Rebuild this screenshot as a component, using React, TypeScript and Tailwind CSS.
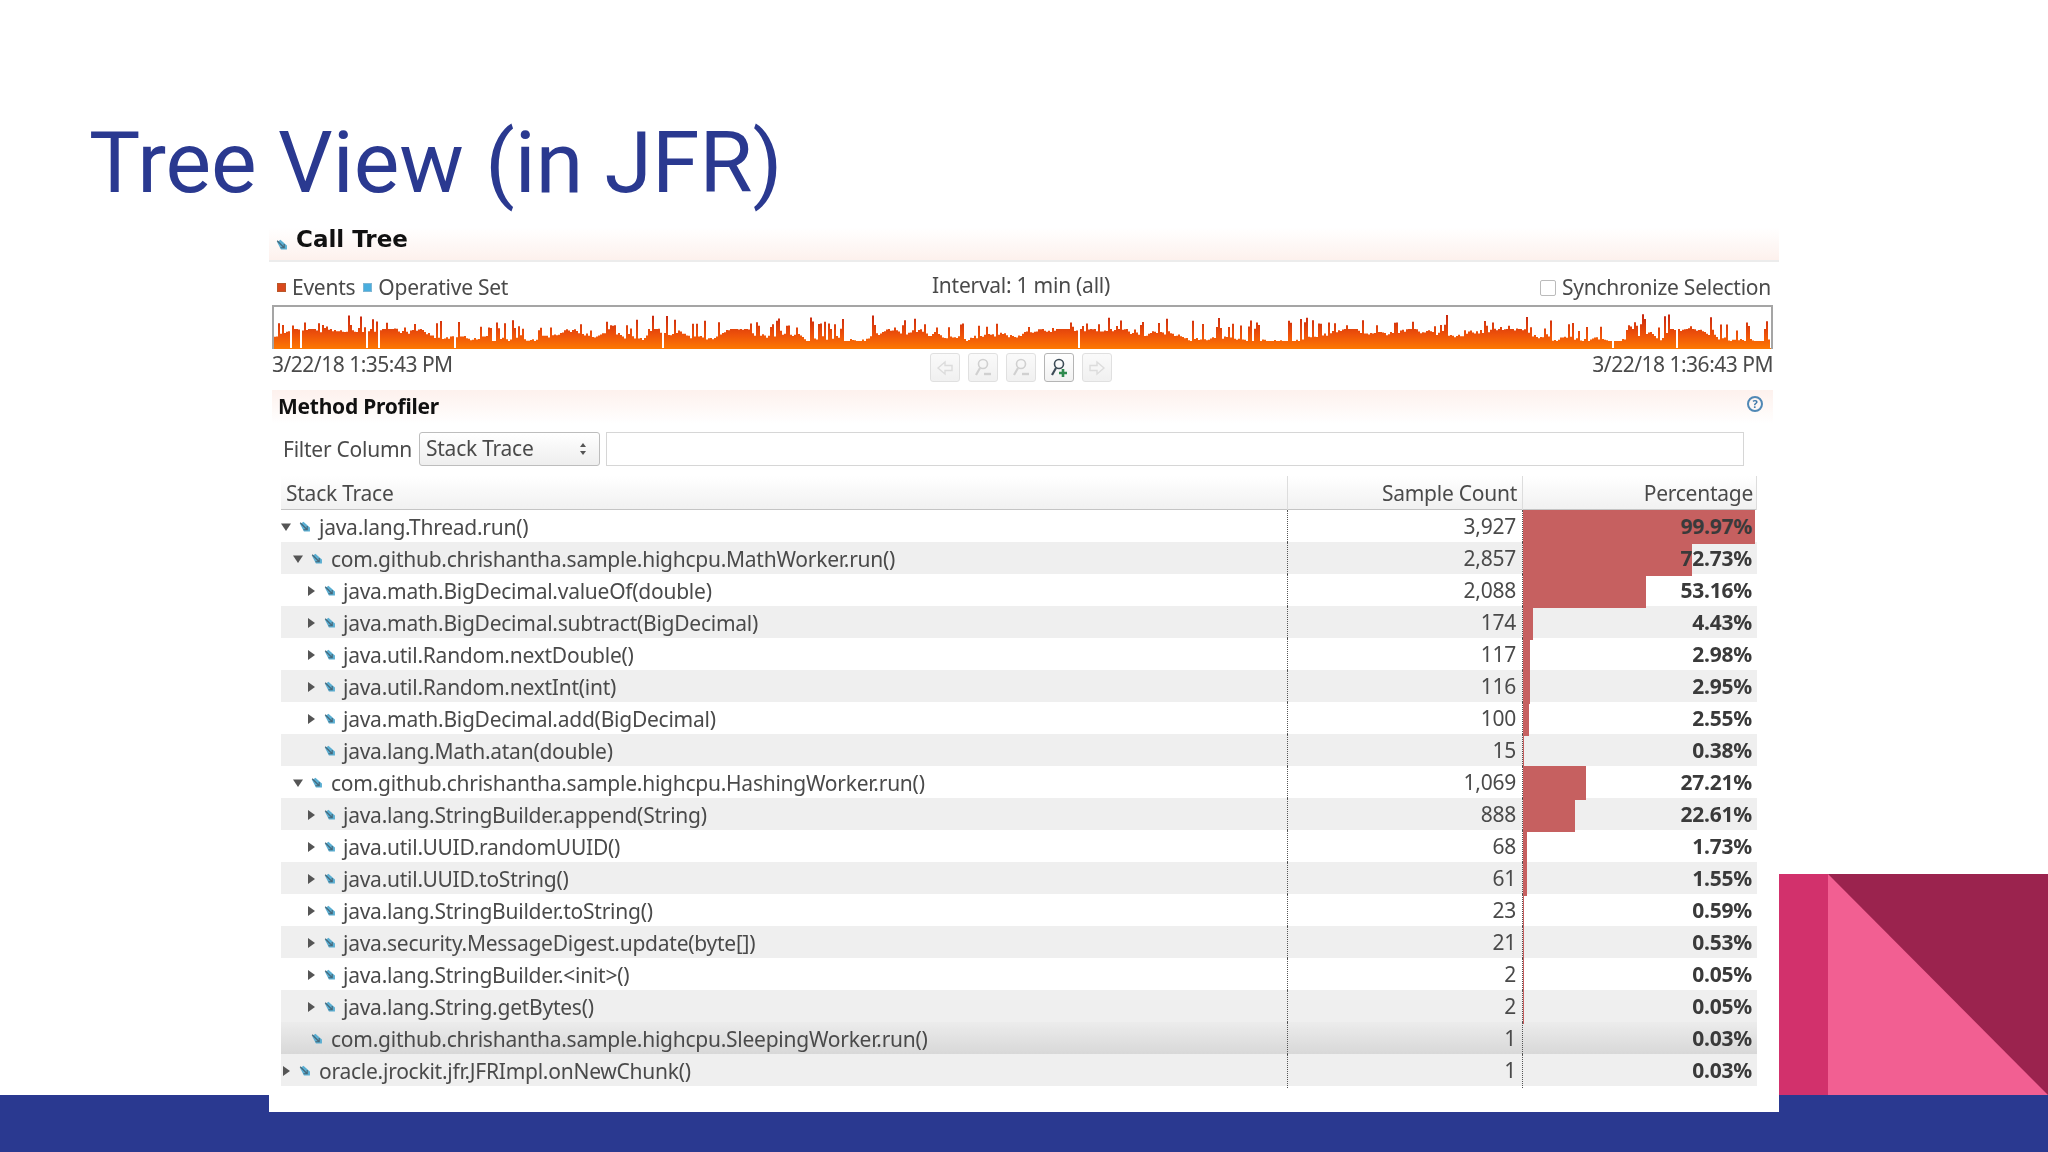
import React from "react";

const BLUE = "#2a3990";

interface Row {
  name: string;
  depth: number;
  twisty: "open" | "closed" | "none";
  count: string;
  pct: number;
  selected?: boolean;
}

const rows: Row[] = [
  { name: "java.lang.Thread.run()", depth: 0, twisty: "open", count: "3,927", pct: 99.97 },
  { name: "com.github.chrishantha.sample.highcpu.MathWorker.run()", depth: 1, twisty: "open", count: "2,857", pct: 72.73 },
  { name: "java.math.BigDecimal.valueOf(double)", depth: 2, twisty: "closed", count: "2,088", pct: 53.16 },
  { name: "java.math.BigDecimal.subtract(BigDecimal)", depth: 2, twisty: "closed", count: "174", pct: 4.43 },
  { name: "java.util.Random.nextDouble()", depth: 2, twisty: "closed", count: "117", pct: 2.98 },
  { name: "java.util.Random.nextInt(int)", depth: 2, twisty: "closed", count: "116", pct: 2.95 },
  { name: "java.math.BigDecimal.add(BigDecimal)", depth: 2, twisty: "closed", count: "100", pct: 2.55 },
  { name: "java.lang.Math.atan(double)", depth: 2, twisty: "none", count: "15", pct: 0.38 },
  { name: "com.github.chrishantha.sample.highcpu.HashingWorker.run()", depth: 1, twisty: "open", count: "1,069", pct: 27.21 },
  { name: "java.lang.StringBuilder.append(String)", depth: 2, twisty: "closed", count: "888", pct: 22.61 },
  { name: "java.util.UUID.randomUUID()", depth: 2, twisty: "closed", count: "68", pct: 1.73 },
  { name: "java.util.UUID.toString()", depth: 2, twisty: "closed", count: "61", pct: 1.55 },
  { name: "java.lang.StringBuilder.toString()", depth: 2, twisty: "closed", count: "23", pct: 0.59 },
  { name: "java.security.MessageDigest.update(byte[])", depth: 2, twisty: "closed", count: "21", pct: 0.53 },
  { name: "java.lang.StringBuilder.<init>()", depth: 2, twisty: "closed", count: "2", pct: 0.05 },
  { name: "java.lang.String.getBytes()", depth: 2, twisty: "closed", count: "2", pct: 0.05 },
  { name: "com.github.chrishantha.sample.highcpu.SleepingWorker.run()", depth: 1, twisty: "none", count: "1", pct: 0.03, selected: true },
  { name: "oracle.jrockit.jfr.JFRImpl.onNewChunk()", depth: 0, twisty: "closed", count: "1", pct: 0.03 },
];

// seeded so the spikes stay put between runs
function buildChartPath(width: number, height: number) {
  let seed = 1834;
  const rand = () => {
    seed = (seed * 1664525 + 1013904223) % 4294967296;
    return seed / 4294967296;
  };
  let d = `M0 ${height}`;
  let level = 10;
  for (let x = 0; x < width; x += 2) {
    level += (rand() - 0.5) * 5;
    level = Math.max(8, Math.min(20, level));
    const r = rand();
    let h = level;
    if (r > 0.93) h = 25 + rand() * 10;
    else if (r > 0.76) h = 18 + rand() * 9;
    else if (r < 0.012) h = 1;
    d += `V${(height - h).toFixed(1)}H${x + 2}`;
  }
  return d + `V${height}Z`;
}

const chartPath = buildChartPath(1497, 40);

function FrameIcon() {
  return (
    <svg width="13" height="13" viewBox="0 0 12 12" className="shrink-0">
      <path d="M2 4 L5 1.5 L11 7 L11 10.5 L5.5 10.5 Z" fill="#5aaed2" />
      <path d="M2 2.5 L8.5 9 M8.5 5.5 V9 H5" stroke="#46687a" strokeWidth="1.1" fill="none" />
    </svg>
  );
}

function Twisty({ kind }: { kind: Row["twisty"] }) {
  if (kind === "none") return <span className="w-[10px] shrink-0" />;
  return (
    <svg width="10" height="10" viewBox="0 0 10 10" className="shrink-0">
      {kind === "open" ? <path d="M0 1.5 H10 L5 9 Z" fill="#555" /> : <path d="M2 0 L9 5 L2 10 Z" fill="#555" />}
    </svg>
  );
}

function ToolButton({ children, active }: { children: React.ReactNode; active?: boolean }) {
  return (
    <div
      className={`w-[30px] h-[29px] rounded-[3px] border flex items-center justify-center bg-gradient-to-b ${
        active ? "border-[#b5b5b5] from-white to-[#f1f1f1]" : "border-[#e0e0e0] from-[#fafafa] to-[#f0f0f0]"
      }`}
    >
      {children}
    </div>
  );
}

function Lens({ color, badge }: { color: string; badge: string }) {
  return (
    <svg width="22" height="22" viewBox="0 0 22 22">
      <circle cx="11" cy="7" r="4.5" fill="none" stroke={color} strokeWidth="1.6" />
      <path d="M8 11 L4 18" stroke={color} strokeWidth="2.2" />
      {badge === "plus" ? (
        <path d="M15 12 V20 M11 16 H19" stroke="#2f8a4e" strokeWidth="2.6" />
      ) : (
        <path d="M12 17 H19" stroke={badge} strokeWidth="2.4" />
      )}
    </svg>
  );
}

function Arrow({ flip }: { flip?: boolean }) {
  return (
    <svg width="20" height="18" viewBox="0 0 20 18" className={flip ? "-scale-x-100" : ""}>
      <path d="M3 9 L10 3 V6.5 H17 V11.5 H10 V15 Z" fill="#f6f6f6" stroke="#dcdcdc" strokeWidth="1.4" />
    </svg>
  );
}

export default function App() {
  return (
    <div className="w-[2048px] h-[1152px] flex flex-col bg-white overflow-hidden font-['Noto_Sans',sans-serif]">
      <div className="flex h-[1095px]">
        <div className="w-[1779px] shrink-0">
          <h1 className="h-[228px] pl-[89px] pt-[111px] font-['Roboto',sans-serif] text-[86px] leading-[104px] font-normal text-[#2a3990]">
            Tree View (in JFR)
          </h1>

          <div className="relative z-10 ml-[269px] w-[1510px] h-[884px] bg-white text-[#4a4a4a] text-[21px] tracking-[-0.25px] blur-[0.4px]">
            {/* Call Tree */}
            <div className="h-[34px] flex items-center pl-[6px] border-b-2 border-[#ececec] bg-gradient-to-b from-white to-[#fdf1ed]">
              <FrameIcon />
              <span className="ml-[8px] -mt-[10px] font-['DejaVu_Sans',sans-serif] text-[23px] font-bold text-[#111] tracking-normal">
                Call Tree
              </span>
            </div>

            {/* legend */}
            <div className="h-[43px] pl-[8px] pr-[8px] pt-[8px] grid grid-cols-[1fr_auto_1fr] items-center">
              <div className="flex items-center">
                <span className="w-[9px] h-[9px] bg-[#d9481c] border border-[#b9582a]" />
                <span className="ml-[6px]">Events</span>
                <span className="ml-[8px] w-[9px] h-[9px] bg-[#49aede] border border-[#7fb6d4]" />
                <span className="ml-[6px]">Operative Set</span>
              </div>
              <div className="-mt-[4px] -ml-[6px]">Interval: 1 min (all)</div>
              <div className="flex items-center justify-end">
                <span className="w-[16px] h-[16px] rounded-[2px] border border-[#bbb] bg-white mr-[6px]" />
                <span>Synchronize Selection</span>
              </div>
            </div>

            {/* event chart */}
            <div className="ml-[3px] w-[1501px] h-[44px] border-2 border-b-0 border-[#a5a5a5]">
              <svg width="1497" height="42" viewBox="0 0 1497 42" className="block">
                <defs>
                  <linearGradient id="evt" gradientUnits="userSpaceOnUse" x1="0" y1="6" x2="0" y2="42">
                    <stop offset="0" stopColor="#c8260f" />
                    <stop offset="0.55" stopColor="#ee520a" />
                    <stop offset="1" stopColor="#ff7e00" />
                  </linearGradient>
                </defs>
                <path d={chartPath} transform="translate(0 2)" fill="url(#evt)" />
              </svg>
            </div>

            {/* range row */}
            <div className="h-[41px] ml-[3px] w-[1501px] grid grid-cols-[1fr_auto_1fr]">
              <div className="pt-[1px] leading-[28px] tracking-[-0.5px]">3/22/18 1:35:43 PM</div>
              <div className="flex gap-[8px] pt-[4px] -ml-[4px] h-fit">
                <ToolButton><Arrow /></ToolButton>
                <ToolButton><Lens color="#d0d0d0" badge="#d0d0d0" /></ToolButton>
                <ToolButton><Lens color="#d0d0d0" badge="#d0d0d0" /></ToolButton>
                <ToolButton active><Lens color="#3d4c57" badge="plus" /></ToolButton>
                <ToolButton><Arrow flip /></ToolButton>
              </div>
              <div className="pt-[1px] leading-[28px] tracking-[-0.5px] text-right">3/22/18 1:36:43 PM</div>
            </div>

            {/* Method Profiler */}
            <div className="ml-[3px] w-[1501px] h-[34px] flex items-center justify-between pl-[6px] pr-[10px] bg-gradient-to-b from-[#fdf1ed] to-white">
              <span className="font-bold text-[#111]">Method Profiler</span>
              <span className="-mt-[6px] w-[16px] h-[16px] rounded-full border-2 border-[#4f88b5] text-[#3f78a8] text-[11px] leading-[12px] text-center font-bold tracking-normal">
                ?
              </span>
            </div>

            {/* filter */}
            <div className="h-[52px] flex items-start pt-[8px] pl-[14px]">
              <span className="w-[136px] leading-[34px]">Filter Column</span>
              <div className="w-[181px] h-[34px] rounded-[3px] border border-[#bdbdbd] bg-gradient-to-b from-white to-[#eeeeee] flex items-center justify-between pl-[6px] pr-[12px]">
                <span>Stack Trace</span>
                <svg width="8" height="14" viewBox="0 0 8 14">
                  <path d="M4 1 L7 5 H1 Z M4 13 L1 9 H7 Z" fill="#555" />
                </svg>
              </div>
              <div className="ml-[6px] w-[1138px] h-[34px] border border-[#d6d6d6] bg-white" />
            </div>

            {/* table */}
            <div className="ml-[12px] w-[1476px]">
              <div className="h-[34px] grid grid-cols-[1006px_235px_235px] border-b border-[#c4c4c4] bg-gradient-to-b from-white to-[#f1f1f1] leading-[34px]">
                <div className="pl-[5px]">Stack Trace</div>
                <div className="border-l border-[#dddddd] text-right pr-[5px]">Sample Count</div>
                <div className="border-x border-[#dddddd] text-right pr-[3px]">Percentage</div>
              </div>
              {rows.map((row, i) => (
                <div
                  key={row.name}
                  className={`h-[32px] grid grid-cols-[1006px_235px_235px] ${
                    row.selected
                      ? "bg-gradient-to-b from-[#ececec] to-[#d8d8d8]"
                      : i % 2 === 1
                        ? "bg-[#efefef]"
                        : "bg-white"
                  }`}
                >
                  <div className={`flex items-center ${row.depth === 0 ? "pl-0" : row.depth === 1 ? "pl-[12px]" : "pl-[25px]"}`}>
                    <Twisty kind={row.twisty} />
                    <span className="ml-[7px] flex"><FrameIcon /></span>
                    <span className={`${row.depth === 2 ? "ml-[7px]" : "ml-[8px]"} pt-[2px] whitespace-nowrap`}>{row.name}</span>
                  </div>
                  <div className="border-l border-dotted border-[#555] text-right pr-[6px] leading-[32px]">
                    {row.count}
                  </div>
                  <div className="relative border-l border-dotted border-[#555] text-right pr-[5px] leading-[32px] font-bold text-[#3a3a3a]">
                    <div
                      className="absolute left-0 top-0 bottom-0 bg-[#c66060]"
                      style={{ width: `${row.pct * 2.32}px` }}
                    />
                    <span className="relative">{row.pct.toFixed(2)}%</span>
                  </div>
                </div>
              ))}
            </div>
          </div>
        </div>

        {/* corner decoration */}
        <div className="flex-1 self-end h-[221px]">
          <svg width="269" height="221" viewBox="0 0 269 221" className="block">
            <rect width="269" height="221" fill="#d2316c" />
            <rect x="49" width="220" height="221" fill="#f25f92" />
            <path d="M49 0 H269 V221 Z" fill="#9b234e" />
          </svg>
        </div>
      </div>
      <div className="h-[57px]" style={{ backgroundColor: BLUE }} />
    </div>
  );
}
